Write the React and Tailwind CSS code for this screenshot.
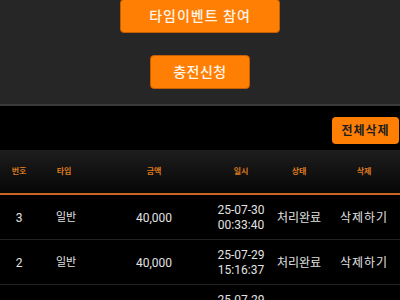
import React from 'react';

const rows = [
  { no: 3, type: '일반', amount: '40,000', date: '25-07-30', time: '00:33:40', status: '처리완료' },
  { no: 2, type: '일반', amount: '40,000', date: '25-07-29', time: '15:16:37', status: '처리완료' },
  { no: 1, type: '일반', amount: '40,000', date: '25-07-29', time: '12:01:15', status: '처리완료' },
];

const font = { fontFamily: 'Roboto, "Noto Sans CJK KR", sans-serif' };

const App = () => {
  return (
    <div className="w-[400px] h-[300px] overflow-hidden bg-black" style={font}>
      {/* top panel */}
      <div className="h-[106px] bg-[#262626] border-b-2 border-[#3a3a3a] flex flex-col items-center">
        <button className="w-[160px] h-[34px] -mt-px rounded-[4px] bg-[#ff7f05] border border-[#c55f00] text-[#fff4e6] text-[14px] tracking-[1px] font-medium">
          타임이벤트 참여
        </button>
        <button className="mt-[22px] w-[100px] h-[34px] rounded-[4px] bg-[#ff7f05] border border-[#c55f00] text-[#fff4e6] text-[14px] tracking-[0.5px] font-medium">
          충전신청
        </button>
      </div>

      <div className="flex justify-end pt-[11px] pr-px">
        <button className="w-[67px] h-[27px] rounded-[4px] bg-[#ff7f05] text-[#1e1e1e] text-[12px] tracking-[1px] font-bold">
          전체삭제
        </button>
      </div>

      {/* table */}
      <div className="mt-[6px]">
        <div className="h-[45px] flex items-center bg-gradient-to-b from-[#1e1e1e] to-[#070707] border-b-2 border-[#c8651f] text-[8px] font-bold text-[#dd7a1e]">
          <div className="w-[38px] text-center">번호</div>
          <div className="w-[52px] text-center">타입</div>
          <div className="w-[128px] text-center">금액</div>
          <div className="w-[46px] text-center">일시</div>
          <div className="w-[70px] text-center">상태</div>
          <div className="w-[60px] text-center">삭제</div>
        </div>
        {rows.map((r) => (
          <div key={r.no} className="h-[45px] pt-[2px] flex items-center border-b border-[#222] text-[#e2e2e2] whitespace-nowrap">
            <div className="w-[38px] text-center text-[12px]">{r.no}</div>
            <div className="w-[52px] text-center text-[11px] pl-[4px]">{r.type}</div>
            <div className="w-[128px] text-center text-[12px]">{r.amount}</div>
            <div className="w-[46px] flex flex-col items-center text-[12px] leading-[15px]">
              <span>{r.date}</span>
              <span>{r.time}</span>
            </div>
            <div className="w-[70px] text-center text-[12px]">{r.status}</div>
            <div className="w-[60px] text-center text-[12px] tracking-[1px]">삭제하기</div>
          </div>
        ))}
      </div>
    </div>
  );
};

export default App;
